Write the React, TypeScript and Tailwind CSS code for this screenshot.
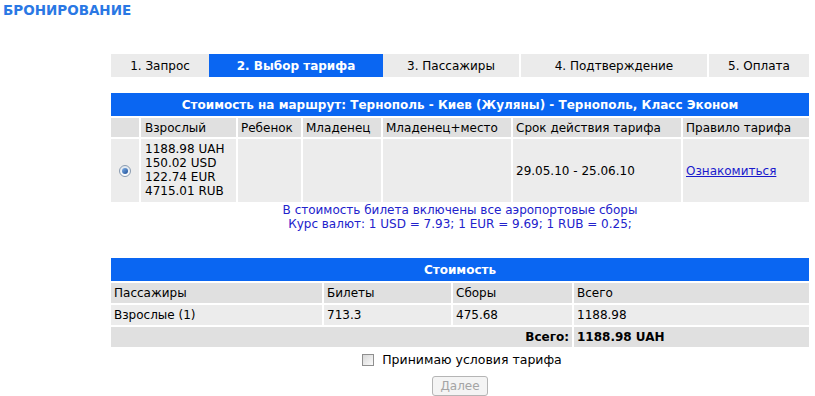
const font = "font-['Verdana','DejaVu_Sans',sans-serif]";

const TABS = [
  { label: "1. Запрос", w: "w-[98px]", active: false, gap: "" },
  { label: "2. Выбор тарифа", w: "w-[174px]", active: true, gap: "" },
  { label: "3. Пассажиры", w: "w-[136px]", active: false, gap: "" },
  { label: "4. Подтверждение", w: "w-[186px]", active: false, gap: "ml-[2px]" },
  { label: "5. Оплата", w: "w-[100px]", active: false, gap: "ml-[2px]" },
];

function Radio() {
  return (
    <span className="flex h-[12px] w-[12px] items-center justify-center rounded-full border border-[#8a9bb0] bg-gradient-to-b from-[#dfe6ee] to-[#ffffff]">
      <span className="h-[6px] w-[6px] rounded-full bg-gradient-to-br from-[#7fb0e8] to-[#1e4f96]" />
    </span>
  );
}

function Checkbox() {
  return (
    <span className="inline-block h-[12px] w-[12px] border border-[#8f8f8f] bg-gradient-to-br from-[#d8d8d8] to-[#fafafa]" />
  );
}

export default function App() {
  return (
    <div className={`${font} h-[396px] w-[815px] bg-white text-[12px] text-black`}>
      <div className="px-[3px] pt-[2px] text-[13.5px] font-bold leading-[16px] text-[#2a78e4]">
        БРОНИРОВАНИЕ
      </div>

      <div className="ml-[111px] w-[698px]">
        {/* steps */}
        <div className="mt-[36px] flex h-[23px]">
          {TABS.map((t) => (
            <div
              key={t.label}
              className={
                `${t.w} ${t.gap} flex items-center justify-center ` +
                (t.active ? "bg-[#0a66f2] font-bold text-white" : "bg-[#ebebeb]")
              }
            >
              {t.label}
            </div>
          ))}
        </div>

        {/* fare table */}
        <div className="mt-[16px] grid grid-cols-[28px_95px_63px_78px_128px_168px_126px] gap-[2px]">
          <div className="col-span-7 flex h-[23px] items-center justify-center bg-[#0a66f2] font-bold text-white">
            Стоимость на маршрут: Тернополь - Киев (Жуляны) - Тернополь, Класс Эконом
          </div>
          <div className="h-[19px] bg-[#e0e0e0]" />
          <div className="flex items-center bg-[#e0e0e0] px-[4px]">Взрослый</div>
          <div className="flex items-center bg-[#e0e0e0] px-[3px]">Ребенок</div>
          <div className="flex items-center bg-[#e0e0e0] px-[3px]">Младенец</div>
          <div className="flex items-center bg-[#e0e0e0] px-[3px]">Младенец+место</div>
          <div className="flex items-center bg-[#e0e0e0] px-[3px]">Срок действия тарифа</div>
          <div className="flex items-center bg-[#e0e0e0] px-[3px]">Правило тарифа</div>

          <div className="flex items-center justify-center bg-[#ececec]">
            <Radio />
          </div>
          <div className="bg-[#ececec] px-[4px] pb-[4px] pt-[3px] leading-[14px]">
            <div>1188.98 UAH</div>
            <div>150.02 USD</div>
            <div>122.74 EUR</div>
            <div>4715.01 RUB</div>
          </div>
          <div className="bg-[#ececec]" />
          <div className="bg-[#ececec]" />
          <div className="bg-[#ececec]" />
          <div className="flex items-center bg-[#ececec] px-[3px]">29.05.10 - 25.06.10</div>
          <div className="flex items-center bg-[#ececec] px-[3px]">
            <a href="#" className="text-[#1a1acc] underline">
              Ознакомиться
            </a>
          </div>
        </div>

        <div className="mt-[1px] text-center leading-[14px] text-[#2222cc]">
          <div>В стоимость билета включены все аэропортовые сборы</div>
          <div>Курс валют: 1 USD = 7.93; 1 EUR = 9.69; 1 RUB = 0.25;</div>
        </div>

        {/* cost table */}
        <div className="mt-[27px] grid grid-cols-[211px_127px_119px_235px] gap-[2px]">
          <div className="col-span-4 flex h-[23px] items-center justify-center bg-[#0a66f2] font-bold text-white">
            Стоимость
          </div>
          <div className="flex h-[20px] items-center bg-[#e0e0e0] px-[3px]">Пассажиры</div>
          <div className="flex items-center bg-[#e0e0e0] px-[3px]">Билеты</div>
          <div className="flex items-center bg-[#e0e0e0] px-[3px]">Сборы</div>
          <div className="flex items-center bg-[#e0e0e0] px-[3px]">Всего</div>

          <div className="flex h-[20px] items-center bg-[#ececec] px-[3px]">Взрослые (1)</div>
          <div className="flex items-center bg-[#ececec] px-[3px]">713.3</div>
          <div className="flex items-center bg-[#ececec] px-[3px]">475.68</div>
          <div className="flex items-center bg-[#ececec] px-[3px]">1188.98</div>

          <div className="col-span-3 flex h-[20px] items-center justify-end bg-[#e0e0e0] px-[3px] font-bold">
            Всего:
          </div>
          <div className="flex items-center bg-[#e0e0e0] px-[3px] font-bold">1188.98 UAH</div>
        </div>

        <div className="mt-[4px] flex h-[18px] items-center justify-center gap-[8px] pl-[4px] text-[12.5px]">
          <Checkbox />
          <span>Принимаю условия тарифа</span>
        </div>

        <div className="mt-[7px] flex justify-center">
          <button
            disabled
            className="h-[20px] w-[56px] rounded-[3px] border border-[#b5b5b5] bg-[#f4f4f4] text-[12px] text-[#a4a4a4]"
          >
            Далее
          </button>
        </div>
      </div>
    </div>
  );
}
